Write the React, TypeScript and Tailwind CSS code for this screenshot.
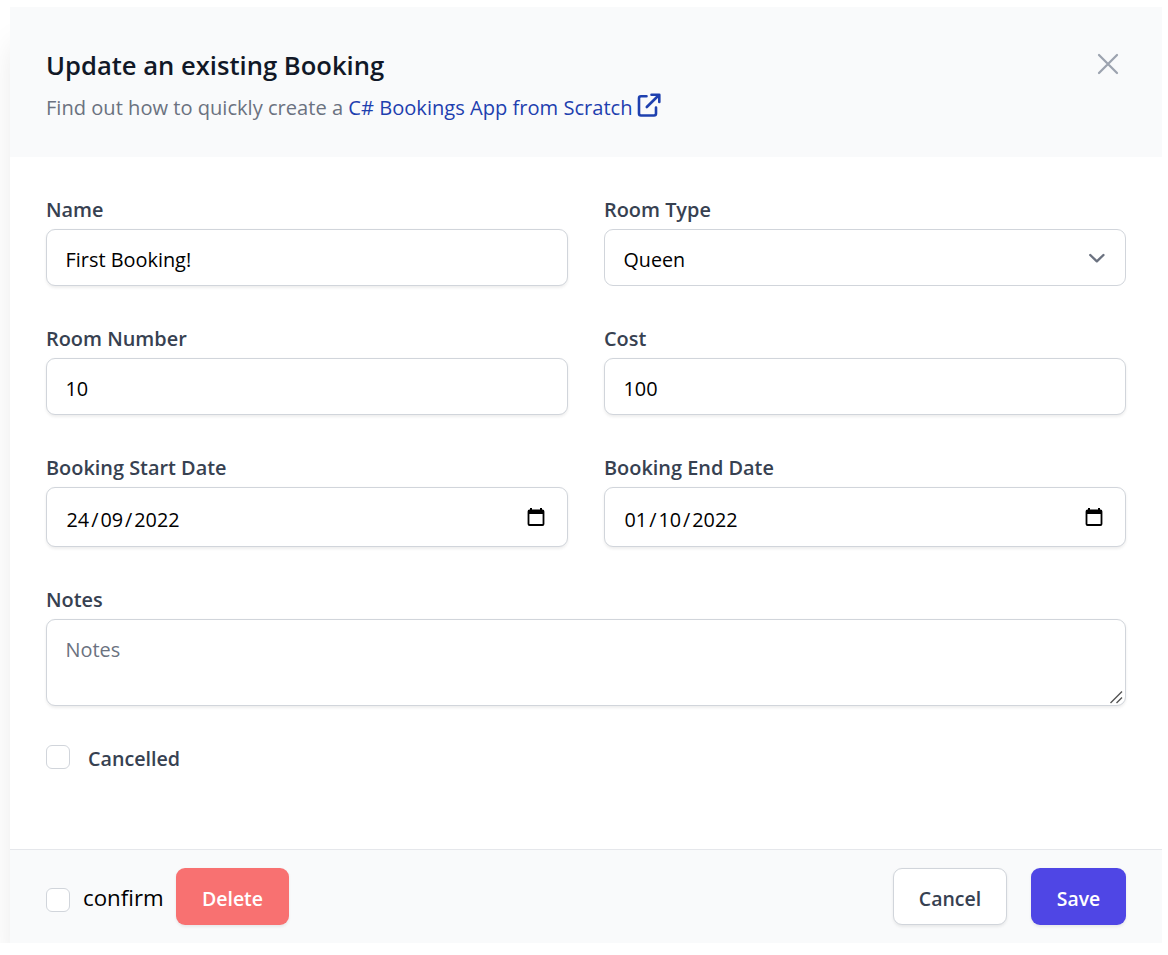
import { Fragment, type ReactNode } from "react";

const control =
  "w-full rounded-[9px] border border-[#d1d5db] bg-white px-[18.5px] text-black placeholder-[#6b7280] outline-none";
const lift = "shadow-[0_1.5px_3px_0_rgba(0,0,0,0.07)]";

function Field({ label, className = "", children }: { label: string; className?: string; children: ReactNode }) {
  return (
    <label className={`flex flex-col gap-1.5 ${className}`}>
      <span className="h-[30px] text-[19.9px] leading-[33px] font-semibold text-[#374151]">{label}</span>
      {children}
    </label>
  );
}

function TextField({ label, value }: { label: string; value: string }) {
  return (
    <Field label={label}>
      <input
        type="text"
        defaultValue={value}
        className={`${control} ${lift} h-[57px] pt-[4px] text-[19.9px]`}
      />
    </Field>
  );
}

function DateField({ label, value }: { label: string; value: string }) {
  return (
    <Field label={label}>
      <div className={`${control} ${lift} flex h-[60px] items-center justify-between pt-[4px] text-[19.8px]`}>
        <span className="pt-[2px] pl-px">
          {value.split("/").map((part, i) => (
            <Fragment key={i}>
              {i > 0 && <span className="px-[2px]">/</span>}
              {part}
            </Fragment>
          ))}
        </span>
        <svg className="mt-[-4px] mr-[4px] h-5 w-[18px]" viewBox="0 0 18 20" fill="none">
          <path d="M1 3h16v4H1z" fill="#000" />
          <path d="M4 1v3M14 1v3" stroke="#000" strokeWidth="2" />
          <rect x="1.5" y="3.5" width="15" height="14.5" rx="1" stroke="#000" strokeWidth="1.8" />
        </svg>
      </div>
    </Field>
  );
}

function Box() {
  return (
    <input
      type="checkbox"
      className="size-6 shrink-0 appearance-none rounded-[6px] border border-[#d1d5db] bg-white"
    />
  );
}

export default function App() {
  return (
    <div className="h-[955px] w-[1168px] overflow-hidden bg-white pt-[7px] font-['Open_Sans','Noto_Sans',sans-serif]">
      <div className="h-[936px] w-[1162px] overflow-hidden pl-[10px]">
        <div className="flex h-[936px] w-[1152px] flex-col bg-white shadow-[-4px_30px_30px_-8px_rgba(0,0,0,0.1)]">
          <header className="flex h-[150px] shrink-0 justify-between bg-[#f9fafb] px-9 pt-[37px]">
            <div>
              <h2 className="h-[42px] text-[25.6px] leading-[43px] font-semibold whitespace-nowrap text-[#111827]">
                Update an existing Booking
              </h2>
              <p className="flex h-[42px] items-center text-[20.1px] leading-[42px] whitespace-nowrap text-[#6b7280]">
                <span className="pt-px">Find out how to quickly create a&nbsp;</span>
                <a className="flex items-center text-[#1e40af]">
                  <span className="pt-px">C# Bookings App from Scratch</span>
                  <svg
                    className="mt-[-5px] ml-[3px] h-[26px] w-[26px]"
                    viewBox="0 0 26 26"
                    fill="none"
                    stroke="currentColor"
                    strokeWidth="2.6"
                    strokeLinecap="round"
                    strokeLinejoin="round"
                  >
                    <path d="M10.500 4.200H5a2 2 0 0 0-2 2V21.500a2 2 0 0 0 2 2H18a2 2 0 0 0 2-2V15.500M15.500 2.800H23.300V10M23 3 10.800 15" />
                  </svg>
                </a>
              </p>
            </div>
            <button aria-label="Close" className="mt-[2px] size-9 text-[#9ca3af]">
              <svg className="size-9" viewBox="0 0 24 24" fill="none" stroke="currentColor" strokeWidth="1.5" strokeLinecap="round">
                <path d="M6 18 18 6M6 6l12 12" />
              </svg>
            </button>
          </header>

          <div className="grid shrink-0 grid-cols-2 gap-9 px-9 pt-9">
            <TextField label="Name" value="First Booking!" />
            <Field label="Room Type">
              <div className={`${control} flex h-[57px] items-center justify-between pt-[4px] text-[19.7px]`}>
                <span>Queen</span>
                <svg
                  className="mt-[-3px] mr-[-5px] size-[30px]"
                  viewBox="0 0 20 20"
                  fill="none"
                  stroke="#6b7280"
                  strokeWidth="1.6"
                  strokeLinecap="round"
                  strokeLinejoin="round"
                >
                  <path d="m5.5 8 4.400 4.200L14.300 8" />
                </svg>
              </div>
            </Field>
            <TextField label="Room Number" value="10" />
            <TextField label="Cost" value="100" />
            <DateField label="Booking Start Date" value="24/09/2022" />
            <DateField label="Booking End Date" value="01/10/2022" />
            <Field label="Notes" className="col-span-2">
              <div className="relative">
                <textarea
                  placeholder="Notes"
                  className={`${control} ${lift} block h-[87px] resize-none py-[14px] text-[19.9px] leading-[32px]`}
                />
                <svg
                  className="pointer-events-none absolute right-[3px] bottom-[2px] size-[14px]"
                  viewBox="0 0 14 14"
                  stroke="#555"
                  strokeWidth="1.4"
                >
                  <path d="M1.500 13 13 1.500M7.500 13 13 7.500" />
                </svg>
              </div>
            </Field>
          </div>

          <label className="mt-[39px] flex h-6 shrink-0 items-center gap-[18px] px-9">
            <Box />
            <span className="pt-[3px] text-[19.7px] leading-[30px] font-semibold text-[#374151]">Cancelled</span>
          </label>

          <footer className="mt-auto flex h-[94px] shrink-0 items-center border-t border-[#e5e7eb] bg-[#f9fafb] px-9">
            <label className="flex items-center">
              <span className="mt-[7px] flex">
                <Box />
              </span>
              <span className="ml-[13px] w-[93px] pt-[2px] text-[22.3px] leading-9 whitespace-nowrap text-black">confirm</span>
            </label>
            <button className={`${lift} h-[57px] w-[113px] rounded-[9px] bg-[#f87171] pt-[4px] text-[19.5px] font-semibold text-white`}>
              Delete
            </button>
            <button
              className={`${lift} ml-auto h-[57px] w-[114px] rounded-[9px] border border-[#d1d5db] bg-white pt-[4px] text-[19.5px] font-semibold text-[#374151]`}
            >
              Cancel
            </button>
            <button className={`${lift} ml-6 h-[57px] w-[95px] rounded-[9px] bg-[#4f46e5] pt-[4px] text-[19.4px] font-semibold text-white`}>
              Save
            </button>
          </footer>
        </div>
      </div>
    </div>
  );
}
